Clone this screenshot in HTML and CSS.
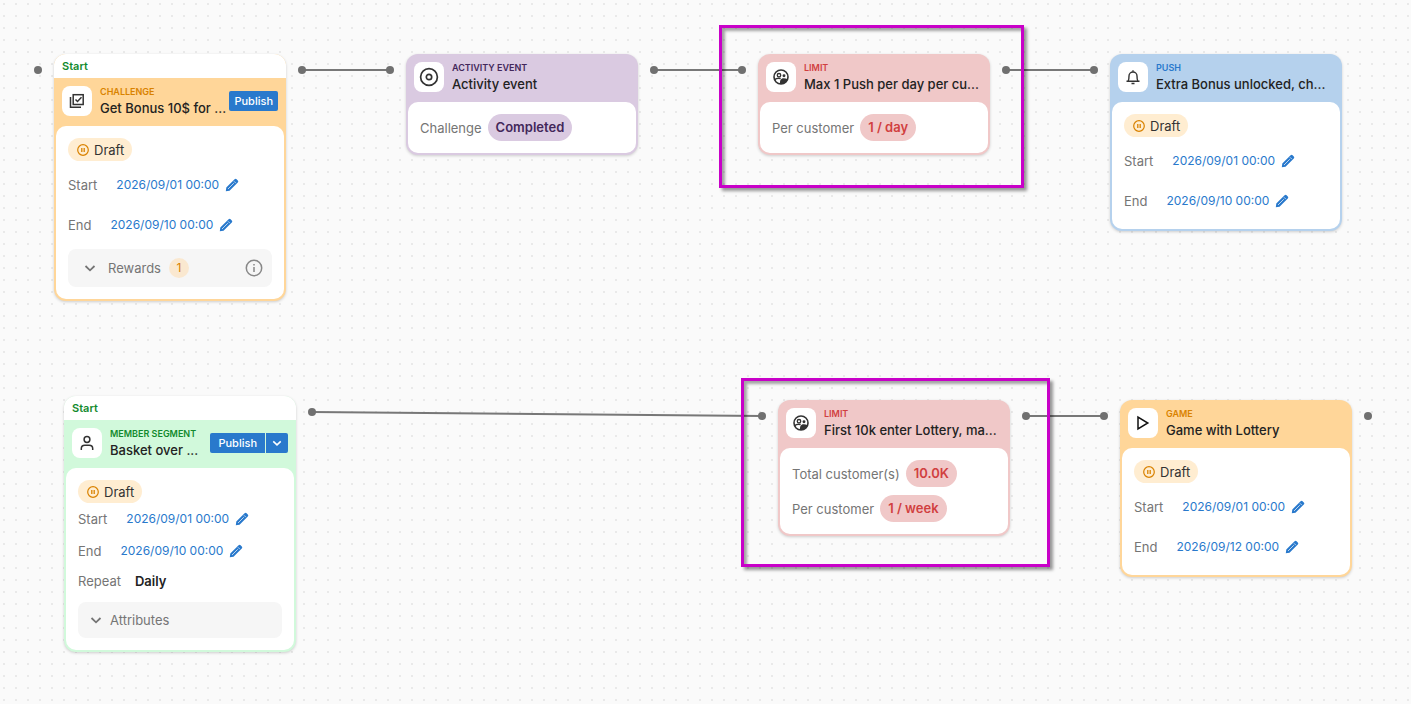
FILE: index.html
```
<!DOCTYPE html>
<html lang="en">
<head>
<meta charset="utf-8">
<title>Campaign flow</title>
<link rel="stylesheet" href="styles.css">
</head>
<body>
<svg class="defs" aria-hidden="true">
  <symbol id="pencil" viewBox="0 0 14 14"><path d="M.8 13.200l.5-3.700 8.300-8.300a1.400 1.400 0 0 1 2 0l1.200 1.200a1.400 1.400 0 0 1 0 2l-8.300 8.300z" fill="#2979cc"/><path d="M3 11 8.800 5.200M9 3.300l1.800 1.800" stroke="#fff" stroke-width=".7"/></symbol>
  <symbol id="pause" viewBox="0 0 12 12"><circle cx="6" cy="6" r="5.300" fill="none" stroke="#d98200" stroke-width="1.200"/><path d="M4.800 4v4M7.200 4v4" stroke="#d98200" stroke-width="1.300"/></symbol>
  <symbol id="chevron" viewBox="0 0 12 12"><path d="M1.500 4 6 8.300 10.500 4" fill="none" stroke="currentColor" stroke-width="1.800"/></symbol>
  <symbol id="group" viewBox="0 0 24 24"><circle cx="12" cy="12" r="10.500" fill="none" stroke="#333" stroke-width="2.400"/><circle cx="9" cy="9.300" r="2.600" fill="none" stroke="#333" stroke-width="2"/><circle cx="16.500" cy="10" r="2.200" fill="#333"/><path d="M2.500 16c3-2.700 6-2.700 9-1.700" fill="none" stroke="#333" stroke-width="2.200"/><path d="M10.500 22.500c-.5-5 1-8.500 5.500-8.500 2 0 4 .2 6 1.200C20.500 19.500 17 22.500 10.500 22.500z" fill="#333"/></symbol>
</svg>
<main class="canvas">
  <svg class="edges" aria-hidden="true">
    <pattern id="dots" width="12" height="12" patternUnits="userSpaceOnUse"><rect x="3" y="3" width="2" height="2" fill="#e9e9e9"/></pattern>
    <rect width="100%" height="100%" fill="url(#dots)"/>
    <g stroke="#777" stroke-width="2"><path d="M302 70H390M654 70H742M1006 70H1094M312 412 762 416M1026 416H1104"/></g>
    <g fill="#707070"><circle cx="38" cy="70" r="4"/><circle cx="302" cy="70" r="4"/><circle cx="390" cy="70" r="4"/><circle cx="654" cy="70" r="4"/><circle cx="742" cy="70" r="4"/><circle cx="1006" cy="70" r="4"/><circle cx="1094" cy="70" r="4"/><circle cx="312" cy="412" r="4"/><circle cx="762" cy="416" r="4"/><circle cx="1026" cy="416" r="4"/><circle cx="1104" cy="416" r="4"/><circle cx="1368" cy="416" r="4"/></g>
  </svg>

  <article class="node node-challenge orange">
    <div class="start">Start</div>
    <header class="head">
      <span class="icon"><svg width="16" height="16" viewBox="0 0 16 16" fill="none" stroke="#333" stroke-width="1.500"><rect x="4.200" y="1.700" width="10" height="9.800"/><path d="M1.500 4v10.200H12M6.500 6.500l2 2 4-4.300"/></svg></span>
      <div class="names"><div class="kind">CHALLENGE</div><div class="title">Get Bonus 10$ for ...</div></div>
      <button class="btn" type="button">Publish</button>
    </header>
    <div class="body">
      <div class="draft"><svg><use href="#pause"/></svg>Draft</div>
      <div class="rows">
        <div class="row">Start<button class="date" type="button">2026/09/01 00:00<svg><use href="#pencil"/></svg></button></div>
        <div class="row">End<button class="date" type="button">2026/09/10 00:00<svg><use href="#pencil"/></svg></button></div>
      </div>
      <div class="panel rewards"><svg class="chev"><use href="#chevron"/></svg><span>Rewards</span><span class="count">1</span><svg class="info" viewBox="0 0 18 18"><circle cx="9" cy="9" r="7.700" fill="none" stroke="#888" stroke-width="1.500"/><path d="M9 8v5M9 5v1.600" stroke="#888" stroke-width="1.500"/></svg></div>
    </div>
  </article>

  <article class="node node-activity purple">
    <header class="head">
      <span class="icon"><svg width="20" height="20" viewBox="0 0 20 20" fill="none" stroke="#333" stroke-width="1.700"><circle cx="10" cy="10" r="8.400"/><circle cx="10" cy="10" r="2.700"/></svg></span>
      <div class="names"><div class="kind">ACTIVITY EVENT</div><div class="title">Activity event</div></div>
    </header>
    <div class="body"><div class="fact">Challenge<span class="pill">Completed</span></div></div>
  </article>

  <article class="node node-limit-day red">
    <header class="head">
      <span class="icon"><svg width="16" height="16"><use href="#group"/></svg></span>
      <div class="names"><div class="kind">LIMIT</div><div class="title">Max 1 Push per day per cu...</div></div>
    </header>
    <div class="body"><div class="fact">Per customer<span class="pill">1 / day</span></div></div>
  </article>

  <article class="node node-push blue">
    <header class="head">
      <span class="icon"><svg width="16" height="16" viewBox="0 0 16 16" fill="none" stroke="#333" stroke-width="1.400"><path d="M1.500 12.200h13M3.200 12c.8-1.500.8-3 .8-5a4 4 0 0 1 8 0c0 2 0 3.500.8 5M8 3V1.200M6.500 14.500h3"/></svg></span>
      <div class="names"><div class="kind">PUSH</div><div class="title">Extra Bonus unlocked, ch...</div></div>
    </header>
    <div class="body">
      <div class="draft"><svg><use href="#pause"/></svg>Draft</div>
      <div class="rows">
        <div class="row">Start<button class="date" type="button">2026/09/01 00:00<svg><use href="#pencil"/></svg></button></div>
        <div class="row">End<button class="date" type="button">2026/09/10 00:00<svg><use href="#pencil"/></svg></button></div>
      </div>
    </div>
  </article>

  <article class="node node-segment green">
    <div class="start">Start</div>
    <header class="head">
      <span class="icon"><svg width="16" height="16" viewBox="0 0 16 16" fill="none" stroke="#333" stroke-width="1.500"><circle cx="8" cy="4.500" r="2.900"/><path d="M2.300 15v-1.500c0-2 1.500-3.300 3.500-3.300h4.400c2 0 3.500 1.300 3.500 3.300V15"/></svg></span>
      <div class="names"><div class="kind">MEMBER SEGMENT</div><div class="title">Basket over ...</div></div>
      <div class="split"><button class="btn" type="button">Publish</button><button class="btn more" type="button" aria-label="More publish options"><svg><use href="#chevron"/></svg></button></div>
    </header>
    <div class="body">
      <div class="draft"><svg><use href="#pause"/></svg>Draft</div>
      <div class="rows compact">
        <div class="row">Start<button class="date" type="button">2026/09/01 00:00<svg><use href="#pencil"/></svg></button></div>
        <div class="row">End<button class="date" type="button">2026/09/10 00:00<svg><use href="#pencil"/></svg></button></div>
        <div class="row repeat">Repeat<strong>Daily</strong></div>
      </div>
      <div class="panel attributes"><svg class="chev"><use href="#chevron"/></svg><span>Attributes</span></div>
    </div>
  </article>

  <article class="node node-limit-week red">
    <header class="head">
      <span class="icon"><svg width="16" height="16"><use href="#group"/></svg></span>
      <div class="names"><div class="kind">LIMIT</div><div class="title">First 10k enter Lottery, ma...</div></div>
    </header>
    <div class="body">
      <div class="fact">Total customer(s)<span class="pill">10.0K</span></div>
      <div class="fact">Per customer<span class="pill">1 / week</span></div>
    </div>
  </article>

  <article class="node node-game orange">
    <header class="head">
      <span class="icon"><svg width="16" height="16" viewBox="0 0 16 16" fill="none" stroke="#111" stroke-width="1.500"><path d="M3 2v12l9.800-6z"/></svg></span>
      <div class="names"><div class="kind">GAME</div><div class="title">Game with Lottery</div></div>
    </header>
    <div class="body">
      <div class="draft"><svg><use href="#pause"/></svg>Draft</div>
      <div class="rows">
        <div class="row">Start<button class="date" type="button">2026/09/01 00:00<svg><use href="#pencil"/></svg></button></div>
        <div class="row">End<button class="date" type="button">2026/09/12 00:00<svg><use href="#pencil"/></svg></button></div>
      </div>
    </div>
  </article>

  <div class="mark mark-day"></div>
  <div class="mark mark-week"></div>
</main>
</body>
</html>
```
FILE: styles.css
```
* { box-sizing: border-box; }
body { margin: 0; font: 13px/18px Inter, sans-serif; color: #757575; }
button { font: inherit; border: 0; padding: 0; cursor: pointer; }
svg { display: block; flex: none; }
.defs { position: absolute; width: 0; height: 0; }

.canvas {
  position: relative;
  min-height: 100vh;
  overflow: hidden;
  background: #fafafa;
}
.edges { position: absolute; inset: 0; width: 100%; height: 100%; }

.node {
  position: absolute;
  width: 232px;
  border-radius: 12px;
  background: var(--tint);
  box-shadow: 0 1px 3px rgba(0, 0, 0, .18);
}
.node-challenge { left: 54px; top: 54px; }
.node-activity { left: 406px; top: 54px; }
.node-limit-day { left: 758px; top: 54px; }
.node-push { left: 1110px; top: 54px; }
.node-segment { left: 64px; top: 396px; }
.node-limit-week { left: 778px; top: 400px; }
.node-game { left: 1120px; top: 400px; }

.orange { --tint: #ffd699; --ink: #d98200; }
.purple { --tint: #dacae1; --ink: #43275a; }
.red { --tint: #f0c8c8; --ink: #d13f3f; }
.blue { --tint: #b5d1ed; --ink: #2979cc; }
.green { --tint: #d1f9db; --ink: #128a2d; }

.start {
  height: 24px;
  padding: 0 8px;
  border-radius: 12px 12px 0 0;
  background: #fff;
  color: #128a2d;
  font-size: 11px;
  font-weight: 600;
  line-height: 24px;
}
.head { display: flex; gap: 8px; height: 48px; padding: 8px; }
.icon {
  display: grid;
  place-items: center;
  flex: none;
  width: 30px;
  height: 30px;
  border-radius: 8px;
  background: #fff;
}
.names { flex: 1; min-width: 0; white-space: nowrap; }
.kind { color: var(--ink); font-size: 9px; font-weight: 600; line-height: 12px; }
.title { color: #222; font-size: 13px; font-weight: 500; line-height: 20px; }
.btn {
  height: 20px;
  margin-top: 5px;
  padding: 0 5px;
  border-radius: 2px;
  background: #2979cc;
  color: #fff;
  font-size: 11px;
  font-weight: 500;
}
.split { display: flex; gap: 1px; }
.split .btn { padding: 0 8px; border-radius: 2px 0 0 2px; }
.split .more { padding: 0 6px; border-radius: 0 2px 2px 0; }
.more svg { width: 10px; height: 10px; }

.body {
  display: flex;
  flex-direction: column;
  gap: 4px;
  margin: 0 2px 2px;
  padding: 12px 12px 8px;
  border-radius: 10px;
  background: #fff;
}
.body:has(.fact) { gap: 8px; padding-bottom: 12px; }
.draft {
  display: flex;
  align-items: center;
  align-self: flex-start;
  gap: 5px;
  height: 23px;
  padding: 0 8px 0 9px;
  border-radius: 12px;
  background: #ffedd1;
  color: #333;
}
.draft svg { width: 12px; height: 12px; }
.row { display: flex; align-items: center; gap: 19px; height: 40px; }
.date { display: flex; align-items: center; gap: 6px; background: none; color: #2979cc; font-size: 12px; }
.date svg { width: 14px; height: 14px; }
.compact { margin-top: -4px; }
.compact .row { height: 32px; }
.compact .repeat { gap: 14px; height: 27px; }
.repeat strong { color: #222; font-weight: 600; }
.panel {
  display: flex;
  align-items: center;
  gap: 12px;
  margin-bottom: 4px;
  border-radius: 8px;
  background: #f6f6f6;
}
.rewards { height: 38px; padding: 0 9px 0 16px; }
.attributes { height: 36px; margin-top: 4px; padding: 0 12px; gap: 8px; }
.chev { width: 12px; height: 12px; }
.count {
  width: 20px;
  margin-left: -4px;
  border-radius: 10px;
  background: #fae8d0;
  color: #d98200;
  font-size: 12px;
  line-height: 20px;
  text-align: center;
}
.info { width: 18px; height: 18px; margin-left: auto; }

.fact { display: flex; align-items: center; gap: 6px; }
.pill {
  padding: 0 8px;
  border-radius: 14px;
  background: var(--tint);
  color: var(--ink);
  font-weight: 600;
  line-height: 27px;
}

.mark {
  position: absolute;
  border: 3px solid #c800c8;
  box-shadow: 3px 3px 3px rgba(0, 0, 0, .4), inset 3px 3px 3px rgba(0, 0, 0, .35);
  pointer-events: none;
}
.mark-day { left: 719px; top: 25px; width: 305px; height: 163px; }
.mark-week { left: 741px; top: 378px; width: 309px; height: 189px; }
```
